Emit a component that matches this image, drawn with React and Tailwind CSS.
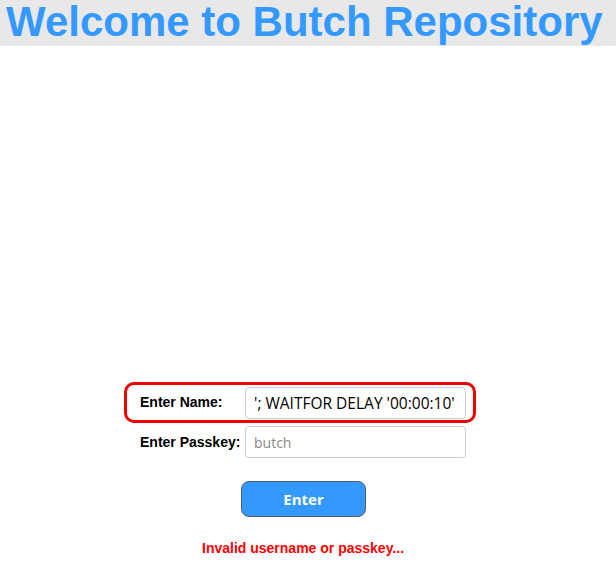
import React, { useState } from 'react';

/**
 * Login page for the repository
 */
const App = () => {
  const [name, setName] = useState("'; WAITFOR DELAY '00:00:10'");
  const [passkey, setPasskey] = useState('');

  return (
    <div className="min-h-[566px] bg-white font-['Liberation_Sans',Arial,sans-serif]">
      {/* Header */}
      <div className="h-[46px] bg-[#e8e8e8]">
        <h1 className="pl-[6px] text-[42px] leading-[43px] font-bold text-[#3399ff] whitespace-nowrap">
          Welcome to Butch Repository
        </h1>
      </div>

      {/* Login form */}
      <div className="ml-[124px] mt-[336px] w-[352px]">
        <div className="flex items-center h-[41px] border-[3px] border-[#ee0000] rounded-[10px] pl-[13px] pr-[7px]">
          <label className="w-[105px] text-[14px] font-bold text-black">Enter Name:</label>
          <input
            value={name}
            onChange={(e) => setName(e.target.value)}
            className="w-[221px] h-[32px] px-[8px] border border-[#cccccc] rounded-[4px] text-[15.5px] text-black font-['Open_Sans',sans-serif] outline-none"
          />
        </div>
        <div className="flex items-center h-[32px] mt-[3px] pl-[16px]">
          <label className="w-[105px] text-[14px] font-bold text-black">Enter Passkey:</label>
          <input
            value={passkey}
            onChange={(e) => setPasskey(e.target.value)}
            placeholder="butch"
            className="w-[221px] h-[32px] px-[8px] border border-[#cccccc] rounded-[4px] text-[14px] text-black placeholder:text-[#888888] font-['Open_Sans',sans-serif] outline-none"
          />
        </div>
      </div>

      <div className="ml-[241px] mt-[23px]">
        <button className="w-[125px] h-[36px] bg-[#3399ff] border border-[#555a66] rounded-[8px] text-white text-[15px] font-bold font-['Open_Sans',sans-serif]">
          Enter
        </button>
      </div>

      <p className="mt-[21px] ml-[202px] text-[14px] font-bold text-[#ff0000]">
        Invalid username or passkey...
      </p>
    </div>
  );
};

export default App;
